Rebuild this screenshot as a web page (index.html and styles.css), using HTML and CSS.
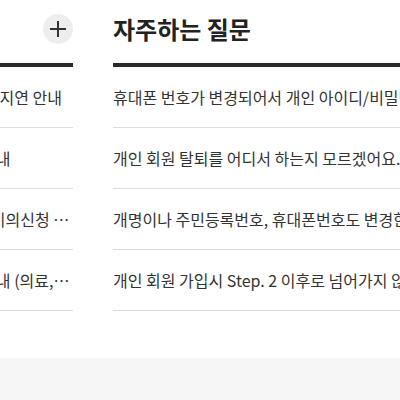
FILE: index.html
```html
<!DOCTYPE html>
<html>
    <head>
        <meta charset="utf-8">
        <title>고객센터</title>
        <link rel="stylesheet" href="styles.css">
    </head>
    <body>

    <div class="board">
        <section class="col">
            <div class="col-head">
                <h2>공지사항</h2>
                <button class="more" type="button" aria-label="더보기">
                    <svg width="16" height="16" viewBox="0 0 16 16"><path d="M8 0v16M0 8h16" stroke="#333" stroke-width="2" fill="none"/></svg>
                </button>
            </div>
            <ul class="list">
                <li><a href="#">홈페이지 서비스 정기점검에 따른 처리 지연 안내</a></li>
                <li><a href="#">이용약관 및 개인정보처리방침 개정 안내</a></li>
                <li><a href="#">2023년 귀속 연말정산 간소화 자료의 이의신청 기간 안내</a></li>
                <li><a href="#">연말정산 간소화자료 제출기관 추가 안내 (의료, 교육, 기부금)</a></li>
            </ul>
        </section>

        <section class="col">
            <div class="col-head">
                <h2>자주하는 질문</h2>
            </div>
            <ul class="list">
                <li><a href="#">휴대폰 번호가 변경되어서 개인 아이디/비밀번호를 찾을 수 없어요.</a></li>
                <li><a href="#">개인 회원 탈퇴를 어디서 하는지 모르겠어요.</a></li>
                <li><a href="#">개명이나 주민등록번호, 휴대폰번호도 변경한 경우 어떻게 하나요?</a></li>
                <li><a href="#">개인 회원 가입시 Step. 2 이후로 넘어가지 않아요.</a></li>
            </ul>
        </section>
    </div>

    <footer class="band"></footer>

    </body>
</html>
```

FILE: styles.css
```css
body, html {
    margin: 0;
    padding: 0;
    background: #fff;
    overflow: hidden;
    font-family: "Noto Sans CJK KR", "Noto Sans", sans-serif;
    color: #333;
}
.board {
    display: flex;
    gap: 40px;
    margin-left: -254px;
    padding-bottom: 47px;
}
.col {
    flex: none;
    width: 327px;
}
.col-head {
    display: flex;
    align-items: center;
    justify-content: space-between;
    height: 57px;
    padding-bottom: 6px;
    border-bottom: 4px solid #2b2b2b;
}
.col-head h2 {
    margin: 0;
    font-size: 24px;
    font-weight: bold;
    color: #222;
    line-height: 1;
}
.more {
    display: flex;
    align-items: center;
    justify-content: center;
    width: 30px;
    height: 30px;
    padding: 0;
    border: none;
    border-radius: 50%;
    background: #eee;
    cursor: pointer;
}
.list {
    list-style: none;
    margin: 0;
    padding: 0;
}
.list li {
    display: flex;
    align-items: center;
    height: 60px;
    border-bottom: 1px solid #ddd;
}
.list a {
    display: block;
    overflow: hidden;
    white-space: nowrap;
    text-overflow: ellipsis;
    font-size: 16px;
    color: #333;
    text-decoration: none;
}
.band {
    height: 42px;
    background: #f6f6f6;
}
```
